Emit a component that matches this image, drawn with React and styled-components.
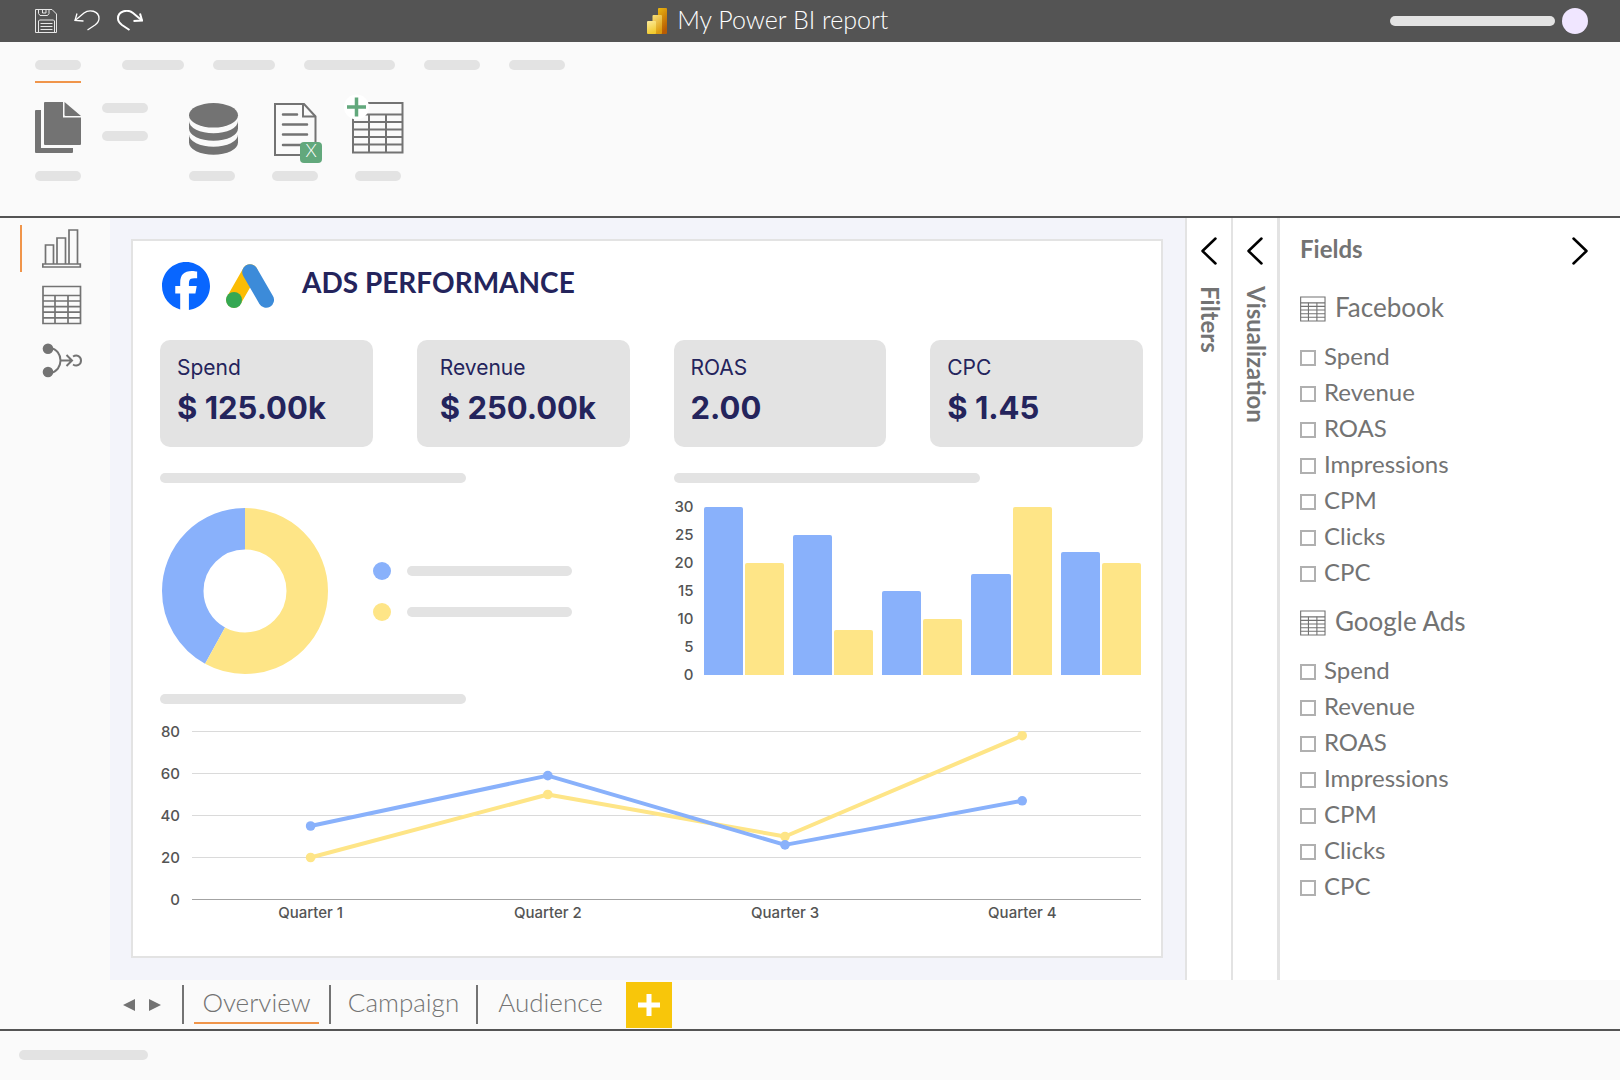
import React, { useState } from 'react';
import styled, { createGlobalStyle } from 'styled-components';

const BLUE = '#89b1fb';
const YELLOW = '#fee587';

const RIBBON_TABS = [46, 62, 62, 91, 56, 56];

const KPIS = [
  { label: 'Spend', value: '$ 125.00k' },
  { label: 'Revenue', value: '$ 250.00k', wide: true },
  { label: 'ROAS', value: '2.00' },
  { label: 'CPC', value: '$ 1.45' },
];

const BARS = [
  { id: 1, facebook: 30, google: 20 },
  { id: 2, facebook: 25, google: 8 },
  { id: 3, facebook: 15, google: 10 },
  { id: 4, facebook: 18, google: 30 },
  { id: 5, facebook: 22, google: 20 },
];
const BAR_TICKS = [30, 25, 20, 15, 10, 5, 0];

const QUARTERS = ['Quarter 1', 'Quarter 2', 'Quarter 3', 'Quarter 4'];
const LINE_TICKS = [80, 60, 40, 20, 0];
const LINES = [
  { id: 'google', color: YELLOW, values: [20, 50, 30, 78] },
  { id: 'facebook', color: BLUE, values: [35, 59, 26, 47] },
];

const METRICS = [
  'Spend',
  'Revenue',
  'ROAS',
  'Impressions',
  'CPM',
  'Clicks',
  'CPC',
];
const SOURCES = ['Facebook', 'Google Ads'];
const PAGES = ['Overview', 'Campaign', 'Audience'];

function SaveIcon() {
  return (
    <svg width="22" height="24" fill="none" stroke="#e6e6e6">
      <path d="M.5.5H17L21.5 5v18.500H.5z" />
      <path d="M3.500.5v4l1.500 2h7.500l1.500-2v-4M7.500.5v3.500h3.500V.5" />
      <path d="M3.500 23.500V12l1-1h14l1 1v11.500" />
      <path d="M5.500 14.500h12M5.500 17.500h12M5.500 20.500h12" />
    </svg>
  );
}

function UndoIcon({ flip, weight }) {
  return (
    <svg width="26" height="22" fill="none" stroke="#fff" strokeWidth={weight}>
      <g transform={flip ? 'translate(26 0) scale(-1 1)' : undefined}>
        <path d="M1 10.500 10 3C15-1 25 .5 25 8.500c0 3-2 5-4 6.500l-7.500 5" />
        <path d="M3 3.500 1 10.500l8.500.5" />
      </g>
    </svg>
  );
}

function PowerBiLogo() {
  return (
    <svg width="20" height="26">
      <defs>
        <linearGradient id="pbBack" x1="0" y1="0" x2="0.4" y2="1">
          <stop offset="0" stopColor="#ebb910" />
          <stop offset="1" stopColor="#b85c04" />
        </linearGradient>
        <linearGradient id="pbMid" x1="0" y1="0" x2="0.4" y2="1">
          <stop offset="0" stopColor="#f8e07a" />
          <stop offset="1" stopColor="#dc9c10" />
        </linearGradient>
        <linearGradient id="pbFront" x1="0" y1="0" x2="0.3" y2="1">
          <stop offset="0" stopColor="#fbea9c" />
          <stop offset="1" stopColor="#f2cb30" />
        </linearGradient>
      </defs>
      <rect x="11" width="9" height="26" rx="1" fill="url(#pbBack)" />
      <rect x="5.500" y="7" width="9.500" height="19" rx="1" fill="url(#pbMid)" />
      <rect y="13" width="9" height="13" rx="1" fill="url(#pbFront)" />
    </svg>
  );
}

function PagesIcon() {
  return (
    <svg width="46" height="56" fill="#737373">
      <path d="M1 9h5v38h32v4q0 1-1 1H1q-1 0-1-1V10q0-1 1-1z" />
      <path d="M10 1h18v15.500h18V43q0 1-1 1H10q-1 0-1-1V2q0-1 1-1z" />
      <path d="M29.500 1 46 15H30.500q-1 0-1-1z" />
    </svg>
  );
}

function DatabaseIcon() {
  return (
    <svg width="50" height="56" fill="#737373">
      <ellipse cx="24.500" cy="14.300" rx="24.500" ry="12.300" />
      <path d="M0 20a24.500 12.300 0 0 0 49 0v7.500a24.500 12.300 0 0 1-49 0z" />
      <path d="M0 33.500a24.500 12.300 0 0 0 49 0v8a24.500 12.300 0 0 1-49 0z" />
    </svg>
  );
}

function ExcelIcon() {
  return (
    <ToolSvg width="50" height="56" fill="none" stroke="#737373">
      <path d="M3 3h29l11.500 12.500v38.500H3z" strokeWidth="2" />
      <path d="M31 3v12.500h12" strokeWidth="2" />
      <path
        d="M11 13.500h14M11 23.500h24M11 33.500h24M11 44h18"
        strokeWidth="2.500"
        strokeLinecap="round"
      />
      <rect x="28" y="41" width="22" height="21" rx="4" fill="#62a87c" stroke="none" />
      <BadgeText x="39" y="56">
        X
      </BadgeText>
    </ToolSvg>
  );
}

function AddTableIcon() {
  return (
    <ToolSvg width="50" height="56" fill="none" stroke="#737373" strokeWidth="2">
      <path d="M-2 2h49.500v49.500H-2z" />
      <path d="M-2 13.500h49.500M-2 21h49.500M-2 28.500h49.500M-2 36h49.500M-2 43.500h49.500" />
      <path d="M14 13.500v38M31 13.500v38" />
      <circle cx="1.500" cy="6" r="12.500" fill="#fff" stroke="none" />
      <path d="M-8 6h19M1.500-3.500v19" stroke="#62a87c" strokeWidth="3.500" />
    </ToolSvg>
  );
}

function ChartIcon() {
  return (
    <svg width="40" height="40" fill="none" stroke="#737373" strokeWidth="1.700">
      <path d="M.8 35h37.500v3H.8z" />
      <path d="M3.500 35V16h8v19M15 35V9h8.500v26M27 35V1h8.500v34" />
    </svg>
  );
}

function TableIcon({ size }) {
  return (
    <svg
      width={size}
      height={size}
      viewBox="0 0 40 40"
      fill="none"
      stroke="#737373"
      strokeWidth="1.700"
    >
      <path d="M1 1.500h37.500v37H1z" />
      <path d="M1 10.500h37.500M1 16h37.500M1 21.600h37.500M1 27.200h37.500M1 32.800h37.500" />
      <path d="M13 10.500v28M26 10.500v28" />
    </svg>
  );
}

function ModelIcon() {
  return (
    <svg width="40" height="36" fill="none" stroke="#737373" strokeWidth="2">
      <circle cx="6" cy="5.800" r="5.300" fill="#737373" stroke="none" />
      <circle cx="6" cy="29" r="5.300" fill="#737373" stroke="none" />
      <path d="M8 5c14 2 14 23 0 25M18.500 17.500H30M24.500 12l5.500 5.500-5.500 5.500" />
      <path d="M31 13.500c4-2.500 8 0 8 4s-4 6.500-8 4" />
    </svg>
  );
}

function Chevron({ right }) {
  return (
    <svg
      width="16"
      height="28"
      fill="none"
      stroke="#000"
      strokeWidth="2.500"
      strokeLinecap="round"
      strokeLinejoin="round"
    >
      <path d={right ? 'M1.500 1.500 14.500 14l-13 12.500' : 'M14.500 1.500 1.500 14l13 12.500'} />
    </svg>
  );
}

function FacebookLogo() {
  return (
    <svg width="48" height="48" viewBox="0 0 24 24" fill="#0866ff">
      <path d="M9.101 23.691v-7.980H6.627v-3.667h2.474v-1.580c0-4.085 1.848-5.978 5.858-5.978.401 0 .955.042 1.468.103a8.680 8.680 0 0 1 1.141.195v3.325a8.623 8.623 0 0 0-.653-.036 26.805 26.805 0 0 0-.733-.009c-.707 0-1.259.096-1.675.309a1.686 1.686 0 0 0-.679.622c-.258.420-.374.995-.374 1.752v1.297h3.919l-.386 2.103-.287 1.564h-3.246v8.245C19.396 23.238 24 18.179 24 12.044c0-6.627-5.373-12-12-12s-12 5.373-12 12c0 5.628 3.874 10.350 9.101 11.647Z" />
    </svg>
  );
}

function GoogleAdsLogo() {
  return (
    <svg width="48" height="48" strokeWidth="15.600" strokeLinecap="round">
      <path d="M24 10 8 38" stroke="#fbbc04" />
      <path d="m24 10 16.200 28" stroke="#3c8bd9" />
      <circle cx="8" cy="38" r="8" fill="#34a853" />
    </svg>
  );
}

function Donut() {
  return (
    <svg width="168" height="168" fill="none" strokeWidth="41.500">
      <g transform="rotate(-90 84 84)">
        <circle
          cx="84"
          cy="84"
          r="62.250"
          stroke={BLUE}
          pathLength="100"
          strokeDasharray="42 58"
          strokeDashoffset="-58"
        />
        <circle
          cx="84"
          cy="84"
          r="62.250"
          stroke={YELLOW}
          pathLength="100"
          strokeDasharray="58 42"
        />
      </g>
    </svg>
  );
}

function LineChart() {
  const x = i => 118.6 + i * 237.2;
  const y = value => 167.5 - value * 2.1;

  return (
    <LineSvg viewBox="0 0 949 168" preserveAspectRatio="none">
      {LINE_TICKS.map(tick => (
        <line
          key={tick}
          x1="0"
          x2="949"
          y1={y(tick)}
          y2={y(tick)}
          stroke={tick ? '#dadada' : '#a3a3a3'}
        />
      ))}
      {LINES.map(line => (
        <g key={line.id} fill={line.color}>
          <polyline
            points={line.values.map((v, i) => `${x(i)},${y(v)}`).join(' ')}
            fill="none"
            stroke={line.color}
            strokeWidth="4"
            strokeLinejoin="round"
          />
          {line.values.map((v, i) => (
            <circle key={i} cx={x(i)} cy={y(v)} r="4.800" />
          ))}
        </g>
      ))}
    </LineSvg>
  );
}

function Axis({ ticks }) {
  return (
    <AxisColumn>
      {ticks.map(tick => (
        <Tick key={tick}>{tick}</Tick>
      ))}
    </AxisColumn>
  );
}

function Report() {
  return (
    <ReportPage>
      <ReportHeader>
        <FacebookLogo />
        <GoogleAdsLogo />
        <ReportTitle>ADS PERFORMANCE</ReportTitle>
      </ReportHeader>

      <KpiRow>
        {KPIS.map(kpi => (
          <KpiCard key={kpi.label} $wide={kpi.wide}>
            <KpiLabel>{kpi.label}</KpiLabel>
            <KpiValue>{kpi.value}</KpiValue>
          </KpiCard>
        ))}
      </KpiRow>

      <ChartRow>
        <section>
          <Skeleton $width={306} />
          <DonutWrap>
            <Donut />
            <Legend>
              <LegendItem $color={BLUE}>
                <Skeleton $width={165} />
              </LegendItem>
              <LegendItem $color={YELLOW}>
                <Skeleton $width={165} />
              </LegendItem>
            </Legend>
          </DonutWrap>
        </section>
        <section>
          <Skeleton $width={306} />
          <BarChart>
            <Axis ticks={BAR_TICKS} />
            <Groups>
              {BARS.map(group => (
                <Group key={group.id}>
                  <Bar
                    $color={BLUE}
                    style={{ height: `${(group.facebook / 30) * 100}%` }}
                  />
                  <Bar
                    $color={YELLOW}
                    style={{ height: `${(group.google / 30) * 100}%` }}
                  />
                </Group>
              ))}
            </Groups>
          </BarChart>
        </section>
      </ChartRow>

      <LineSection>
        <Skeleton $width={306} />
        <LineWrap>
          <Axis ticks={LINE_TICKS} />
          <LineChart />
          <QuarterRow>
            {QUARTERS.map(quarter => (
              <Tick key={quarter}>{quarter}</Tick>
            ))}
          </QuarterRow>
        </LineWrap>
      </LineSection>
    </ReportPage>
  );
}

function FieldGroup({ name }) {
  return (
    <FieldSection>
      <SourceName>
        <TableIcon size={26} />
        <Caption>{name}</Caption>
      </SourceName>
      {METRICS.map(metric => (
        <FieldLabel key={metric}>
          <Checkbox />
          <Caption>{metric}</Caption>
        </FieldLabel>
      ))}
    </FieldSection>
  );
}

function App() {
  const [page, setPage] = useState('Overview');

  return (
    <Window>
      <GlobalStyle />
      <TitleBar>
        <QuickActions>
          <IconButton aria-label="Save">
            <SaveIcon />
          </IconButton>
          <IconButton aria-label="Undo">
            <UndoIcon weight={1.3} />
          </IconButton>
          <IconButton aria-label="Redo">
            <UndoIcon flip weight={2} />
          </IconButton>
        </QuickActions>
        <WindowTitle>
          <PowerBiLogo />
          <Caption>My Power BI report</Caption>
        </WindowTitle>
        <Account>
          <Skeleton $width={165} />
          <Avatar />
        </Account>
      </TitleBar>

      <Ribbon>
        <RibbonTabs>
          {RIBBON_TABS.map((width, i) => (
            <RibbonTab key={i} aria-label={`Tab ${i + 1}`} $active={i === 0}>
              <Skeleton $width={width} />
            </RibbonTab>
          ))}
        </RibbonTabs>
        <Tools>
          <PasteGroup>
            <Tool aria-label="Paste">
              <PagesIcon />
              <Skeleton $width={46} />
            </Tool>
            <PasteOptions>
              <Skeleton $width={46} />
              <Skeleton $width={46} />
            </PasteOptions>
          </PasteGroup>
          <Tool aria-label="Get data">
            <DatabaseIcon />
            <Skeleton $width={46} />
          </Tool>
          <Tool aria-label="Excel workbook">
            <ExcelIcon />
            <Skeleton $width={46} />
          </Tool>
          <Tool aria-label="Enter data">
            <AddTableIcon />
            <Skeleton $width={46} />
          </Tool>
        </Tools>
      </Ribbon>

      <Body>
        <ViewBar>
          <ViewButton aria-label="Report view" $active>
            <ChartIcon />
          </ViewButton>
          <ViewButton aria-label="Data view">
            <TableIcon size={40} />
          </ViewButton>
          <ViewButton aria-label="Model view">
            <ModelIcon />
          </ViewButton>
        </ViewBar>
        <Canvas>
          <Report />
        </Canvas>
        <FoldedPane>
          <IconButton aria-label="Open filters">
            <Chevron />
          </IconButton>
          <VerticalTitle>Filters</VerticalTitle>
        </FoldedPane>
        <FoldedPane>
          <IconButton aria-label="Open visualization">
            <Chevron />
          </IconButton>
          <VerticalTitle>Visualization</VerticalTitle>
        </FoldedPane>
        <FieldsPane>
          <FieldsHeader>
            <PaneTitle>
              <Caption>Fields</Caption>
            </PaneTitle>
            <IconButton aria-label="Close fields">
              <Chevron right />
            </IconButton>
          </FieldsHeader>
          {SOURCES.map(source => (
            <FieldGroup key={source} name={source} />
          ))}
        </FieldsPane>
      </Body>

      <PageBar>
        <Arrows>
          <IconButton aria-label="Previous page">
            <svg width="12" height="12" fill="#737373">
              <path d="M12 0v12L0 6z" />
            </svg>
          </IconButton>
          <IconButton aria-label="Next page">
            <svg width="12" height="12" fill="#737373">
              <path d="M0 0v12l12-6z" />
            </svg>
          </IconButton>
        </Arrows>
        {PAGES.map(name => (
          <PageCell key={name}>
            <PageTab $active={name === page} onClick={() => setPage(name)}>
              {name}
            </PageTab>
          </PageCell>
        ))}
        <AddPage aria-label="Add page">
          <svg width="24" height="24" stroke="#fff" strokeWidth="5">
            <path d="M1 12h22M12 1v22" />
          </svg>
        </AddPage>
      </PageBar>

      <StatusBar>
        <Skeleton $width={129} />
      </StatusBar>
    </Window>
  );
}

export default App;

const GlobalStyle = createGlobalStyle`
  * {
    box-sizing: border-box;
  }

  body {
    margin: 0;
    font-family: Lato, 'Liberation Sans', sans-serif;
    color: #737373;
    background: #fafafa;
  }

  svg {
    display: block;
    flex-shrink: 0;
  }

  button {
    padding: 0;
    border: 0;
    background: none;
    font: inherit;
    color: inherit;
    cursor: pointer;
  }

  h1,
  h2,
  h3,
  p {
    margin: 0;
  }
`;

const Window = styled.div`
  display: flex;
  flex-direction: column;
  min-height: 100vh;
`;

const Skeleton = styled.span`
  display: block;
  width: ${props => props.$width}px;
  max-width: 100%;
  height: 10px;
  border-radius: 5px;
  background: #e3e3e3;
`;

// Lato sits low in its line box, the bottom padding lifts it level with icons
const Caption = styled.span`
  display: block;
  padding-bottom: 4px;
  line-height: 24px;
`;

const IconButton = styled.button`
  display: flex;
`;

const TitleBar = styled.header`
  display: grid;
  grid-template-columns: 7fr auto 8fr;
  align-items: center;
  height: 42px;
  padding: 0 32px 0 35px;
  background: #545454;
`;

const QuickActions = styled.div`
  display: flex;
  align-items: center;
  gap: 17px;
`;

const WindowTitle = styled.h1`
  display: flex;
  align-items: center;
  gap: 10px;
  font-size: 25px;
  font-weight: 300;
  color: #fff;
`;

const Account = styled.div`
  display: flex;
  align-items: center;
  justify-content: flex-end;
  gap: 7px;
`;

const Avatar = styled.span`
  width: 26px;
  height: 26px;
  border-radius: 50%;
  background: #f0e6ff;
`;

const Ribbon = styled.div`
  height: 176px;
  padding: 18px 35px 0;
  border-bottom: 2px solid #545454;
  background: #fafafa;
`;

const RibbonTabs = styled.nav`
  display: flex;
  gap: 29px;
`;

const RibbonTab = styled.button`
  padding-bottom: 11px;
  border-bottom: 2px solid ${props => (props.$active ? '#f0954a' : 'transparent')};

  &:first-child {
    margin-right: 12px;
  }
`;

const Tools = styled.div`
  display: flex;
  gap: 33px;
  margin-top: 18px;
`;

const Tool = styled.button`
  display: flex;
  flex-direction: column;
  gap: 14px;
  width: 50px;
`;

const ToolSvg = styled.svg`
  overflow: visible;
`;

const BadgeText = styled.text`
  font-size: 18px;
  font-weight: 300;
  text-anchor: middle;
  fill: #fff;
  stroke: none;
`;

const PasteGroup = styled.div`
  display: flex;
  gap: 17px;
  margin-right: 8px;
`;

const PasteOptions = styled.div`
  display: flex;
  flex-direction: column;
  gap: 18px;
  padding-top: 2px;
`;

const Body = styled.main`
  display: flex;
  flex: 1;
`;

const ViewBar = styled.nav`
  display: flex;
  flex-direction: column;
  gap: 9px;
  width: 110px;
  padding: 7px 0 0 20px;
`;

const ViewButton = styled.button`
  display: flex;
  align-items: center;
  height: 47px;
  padding-left: 20px;
  border-left: 2px solid ${props => (props.$active ? '#f0954a' : 'transparent')};
`;

const Canvas = styled.div`
  display: flex;
  flex: 1;
  min-width: 0;
  padding: 21px 22px 22px 21px;
  background: #f3f4fa;
`;

const ReportPage = styled.article`
  flex: 1;
  min-width: 0;
  padding: 21px 18px 20px 27px;
  border: 2px solid #e3e3e3;
  background: #fff;
`;

const ReportHeader = styled.header`
  display: flex;
  align-items: center;
  gap: 16px;
  padding-left: 2px;
`;

const ReportTitle = styled.h2`
  padding: 0 0 8px 12px;
  font-size: 28px;
  font-weight: 700;
  line-height: 34px;
  color: #24245c;
`;

const KpiRow = styled.div`
  display: grid;
  grid-template-columns: repeat(4, 1fr);
  gap: 44px;
  margin-top: 30px;
`;

const KpiCard = styled.div`
  height: 107px;
  padding: 15px 0 0 ${props => (props.$wide ? '23px' : '17px')};
  border-radius: 10px;
  font-family: Inter, sans-serif;
  color: #24245c;
  background: #e3e3e3;
`;

const KpiLabel = styled.p`
  font-size: 21px;
  line-height: 26px;
`;

const KpiValue = styled.p`
  margin-top: 7px;
  font-size: 31px;
  font-weight: 700;
  line-height: 40px;
  white-space: nowrap;
`;

const ChartRow = styled.div`
  display: grid;
  grid-template-columns: 1fr 1fr;
  gap: 44px;
  margin-top: 26px;
`;

const DonutWrap = styled.div`
  display: flex;
  align-items: center;
  gap: 44px;
  margin: 24px 0 0 1px;
`;

const Legend = styled.div`
  display: flex;
  flex-direction: column;
  gap: 23px;
`;

const LegendItem = styled.div`
  display: flex;
  align-items: center;
  gap: 16px;

  &:before {
    content: '';
    width: 18px;
    height: 18px;
    border-radius: 50%;
    background: ${props => props.$color};
  }
`;

const AxisColumn = styled.div`
  display: flex;
  flex-direction: column;
  justify-content: space-between;
  width: 20px;
  margin: -9px 0;
  text-align: right;
`;

const Tick = styled.span`
  font-family: Inter, sans-serif;
  font-size: 15px;
  font-weight: 500;
  line-height: 18px;
  color: #545454;
`;

const BarChart = styled.div`
  display: flex;
  gap: 10px;
  height: 168px;
  margin: 24px 2px 0 0;
`;

const Groups = styled.div`
  display: flex;
  flex: 1;
  gap: 9px;
`;

const Group = styled.div`
  display: flex;
  flex: 1;
  align-items: flex-end;
  gap: 2px;
`;

const Bar = styled.div`
  flex: 1;
  border-radius: 2px 2px 0 0;
  background: ${props => props.$color};
`;

const LineSection = styled.section`
  margin-top: 19px;
`;

const LineWrap = styled.div`
  display: grid;
  grid-template-columns: 20px 1fr;
  column-gap: 12px;
  margin: 28px 2px 0 0;
`;

const LineSvg = styled.svg`
  width: 100%;
  height: 168px;
  overflow: visible;
`;

const QuarterRow = styled.div`
  display: grid;
  grid-column: 2;
  grid-template-columns: repeat(4, 1fr);
  margin-top: 4px;
  text-align: center;
`;

const FoldedPane = styled.aside`
  display: flex;
  flex-direction: column;
  align-items: center;
  gap: 21px;
  width: 46px;
  padding-top: 19px;
  border-left: 2px solid #e3e3e3;
  background: #fff;
`;

const PaneTitle = styled.h2`
  font-size: 24px;
  font-weight: 700;
  line-height: 28px;
`;

const VerticalTitle = styled(PaneTitle)`
  padding-left: 2px;
  writing-mode: vertical-rl;
`;

const FieldsPane = styled.aside`
  width: 343px;
  padding: 19px 32px 0 20px;
  border-left: 3px solid #e3e3e3;
  background: #fff;
`;

const FieldsHeader = styled.div`
  display: flex;
  align-items: center;
  justify-content: space-between;
  margin-bottom: 30px;
`;

const FieldSection = styled.section`
  margin-bottom: 17px;
`;

const SourceName = styled.h3`
  display: flex;
  align-items: center;
  gap: 9px;
  margin-bottom: 17px;
  font-size: 26px;
  font-weight: 400;
`;

const FieldLabel = styled.label`
  display: flex;
  align-items: center;
  gap: 8px;
  height: 36px;
  font-size: 24px;
`;

const Checkbox = styled.input.attrs({ type: 'checkbox' })`
  width: 16px;
  height: 16px;
  margin: 0;
  appearance: none;
  border: 2px solid #b0b0b0;

  &:checked {
    background: #b0b0b0;
  }
`;

const PageBar = styled.nav`
  display: flex;
  align-items: center;
  height: 51px;
  padding-left: 123px;
  border-bottom: 2px solid #545454;
`;

const Arrows = styled.div`
  display: flex;
  gap: 14px;
  margin-right: 21px;
`;

const PageCell = styled.div`
  display: flex;
  justify-content: center;
  width: 147px;
  border-left: 2px solid #737373;
`;

const PageTab = styled.button`
  width: 125px;
  height: 39px;
  padding-bottom: 3px;
  border-bottom: 2px solid ${props => (props.$active ? '#f0954a' : 'transparent')};
  font-size: 26px;
  font-weight: 300;
`;

const AddPage = styled.button`
  display: flex;
  align-items: center;
  justify-content: center;
  width: 46px;
  height: 46px;
  margin-left: 3px;
  background: #f8c60a;
`;

const StatusBar = styled.footer`
  height: 49px;
  padding: 19px;
`;
